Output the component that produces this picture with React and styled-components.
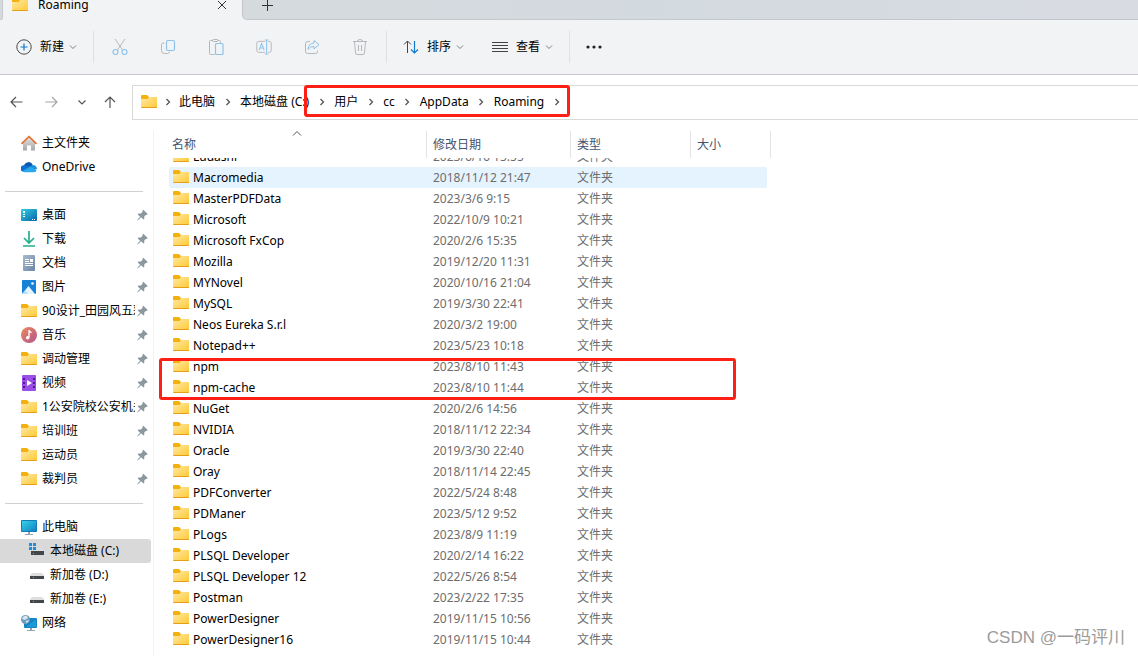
import { Fragment } from 'react';
import styled, { createGlobalStyle } from 'styled-components';

const GlobalStyle = createGlobalStyle`
    * {
        box-sizing: border-box;
    }

    body {
        margin: 0;
        overflow: hidden;
        background-color: #ffffff;
        color: #000000;
        font-family: 'Noto Sans', 'Noto Sans CJK SC', sans-serif;
        font-size: 12px;
        line-height: 20px;
    }

    button {
        padding: 0;
        border: 0;
        background: none;
        color: inherit;
        font: inherit;
    }
`

const Window = styled.div`
    position: relative;
    display: flex;
    flex-direction: column;
    height: 100vh;
    overflow: hidden;
`

/* tabs */

const TabBar = styled.header`
    display: flex;
    flex: none;
    height: 40px;
    margin-top: -20px;
    background-color: #f2f3f5;
`

const TabEdge = styled.div`
    width: 3px;
    background-color: #d6dade;
    border-right: 1px solid #c6cacd;
    border-bottom: 1px solid #c6cacd;
    border-bottom-right-radius: 4px;
`

const ActiveTab = styled.div`
    display: flex;
    align-items: center;
    width: 239px;
    height: 20px;
    margin-top: 15px;
    padding: 0 13px 0 9px;
`

const TabTitle = styled.span`
    flex: 1;
    margin-left: 10px;
`

const TabRest = styled.div`
    flex: 1;
    padding: 15px 0 0 17px;
    background-image: linear-gradient(90deg, #d5dadd, #d3dae0 50%, #d9dbe3);
    border-left: 1px solid #c3c7ca;
    border-bottom: 1px solid #c3c7ca;
    border-bottom-left-radius: 5px;
`

const TabButton = styled.button`
    display: flex;
    align-items: center;
    justify-content: center;
    width: 14px;
    height: 20px;
`

/* toolbar */

const Toolbar = styled.div`
    display: flex;
    flex: none;
    align-items: center;
    height: 55px;
    background-color: #f2f3f5;
    border-bottom: 1px solid #c5c6c9;
`

const MenuButton = styled.button`
    display: flex;
    align-items: center;
    gap: 8px;
    padding: 0 ${props => props.$last ? 16 : 12}px 0 16px;
`

const MenuLabel = styled.span`
    margin-right: -3px;
`

const IconButton = styled.button`
    display: flex;
    align-items: center;
    justify-content: center;
    width: 48px;
    height: 32px;
`

const IconGroup = styled.div`
    display: flex;
    padding: 0 2px;
`

const Separator = styled.div`
    width: 1px;
    height: 32px;
    background-color: #dfe1e4;
`

/* address row */

const AddressRow = styled.div`
    display: flex;
    flex: none;
    padding: 10px 0 5px;
`

const NavButtons = styled.div`
    display: flex;
    align-items: center;
    width: 132px;
    height: 34px;
`

const NavButton = styled.button`
    display: flex;
    align-items: center;
    justify-content: center;
    width: ${props => props.$wide ? 34 : 28}px;
    height: 28px;
`

const AddressBar = styled.nav`
    position: relative;
    display: flex;
    flex: 1;
    align-items: center;
    height: 35px;
    padding: 0 0 1px 8px;
    border: 1px solid #d9d9d9;
    border-right: 0;
    white-space: nowrap;
`

const CrumbArrow = styled.span`
    display: flex;
    flex: none;
    align-items: center;
    justify-content: center;
    width: 25px;

    &:nth-child(2) {
        width: 22px;
    }
`

const Mark = styled.div`
    position: absolute;
    top: ${props => props.$top}px;
    left: ${props => props.$left}px;
    width: ${props => props.$width}px;
    height: ${props => props.$height}px;
    border: 3px solid #ff2015;
    border-radius: 3px;
    pointer-events: none;
`

/* sidebar */

const Content = styled.div`
    display: flex;
    flex: 1;
    min-height: 0;
    padding-top: 6px;
`

const Sidebar = styled.aside`
    flex: none;
    width: 154px;
    padding-right: 2px;
    border-right: 1px solid #f2f2f2;
`

const SideItem = styled.a`
    display: flex;
    align-items: center;
    height: 24px;
    padding: 0 3px 0 ${props => props.$nested ? 29 : 21}px;
    border-radius: 0 3px 3px 0;
    background-color: ${props => props.$selected ? '#d9d9d9' : 'transparent'};
    color: inherit;
    text-decoration: none;

    svg {
        flex: none;
    }
`

const SideLabel = styled.span`
    flex: 1;
    margin: 0 2px 0 5px;
    overflow: hidden;
    white-space: nowrap;
`

const SideDivider = styled.hr`
    height: 1px;
    margin: 12px 8px 11px 5px;
    border: 0;
    background-color: #d0d0d0;
`

/* file list */

const Files = styled.main`
    position: relative;
    flex: 1;
    min-width: 0;
    padding-left: 15px;
    overflow: hidden;
`

const FileTable = styled.table`
    display: block;
`

const FileHead = styled.thead`
    position: relative;
    z-index: 1;
    display: block;
    background-color: #ffffff;

    tr {
        display: grid;
        grid-template-columns: 258px 144px 120px 80px;
        height: 27px;
    }
`

const HeadCell = styled.th`
    position: relative;
    padding: 4px 0 0 ${props => props.$first ? 3 : 6}px;
    border-right: 1px solid #e3e3e3;
    color: #44546f;
    font-weight: 400;
    text-align: left;
`

const SortMark = styled.svg`
    position: absolute;
    top: 0;
    left: 123px;
`

const FileBody = styled.tbody`
    display: block;
    margin-top: -12px;
`

const FileRow = styled.tr`
    display: grid;
    grid-template-columns: 258px 144px 120px 76px;
    width: 598px;
    height: 21px;
    border-radius: 2px;
    background-color: ${props => props.$selected ? '#e5f3ff' : 'transparent'};
`

const FileCell = styled.td`
    padding: 0 0 0 6px;
    color: #6d6d6d;
    line-height: 21px;
    white-space: nowrap;
`

const NameCell = styled(FileCell)`
    display: flex;
    gap: 4px;
    padding-left: 4px;
    color: #000000;

    svg {
        margin-top: 2px;
    }
`

const Watermark = styled.div`
    position: absolute;
    right: 13px;
    bottom: 6px;
    color: #9b9b9b;
    font-family: 'Liberation Sans', 'Noto Sans CJK SC', sans-serif;
    font-size: 17px;
    line-height: 24px;
`

const FolderIcon = () => (
    <svg width="16" height="16" viewBox="0 0 16 16">
        <defs>
            <linearGradient id="folder" x1="0" y1="0" x2="1" y2="1">
                <stop offset="0" stopColor="#ffe9a6" />
                <stop offset="1" stopColor="#ffc933" />
            </linearGradient>
        </defs>
        <path d="M0 2q0-1 1-1h5l2 2h7q1 0 1 1v4H0z" fill="#f4b00c" />
        <path d="M0 5h6.500L8 3h7q1 0 1 1v9q0 1-1 1H1q-1 0-1-1z" fill="url(#folder)" />
        <path d="M0 13q0 1 1 1h14q1 0 1-1z" fill="#e59f16" />
    </svg>
)

const Chevron = ({ color = '#808080' }) => (
    <svg width="8" height="8" viewBox="0 0 8 8" fill="none" stroke={color}>
        <path d="M1 2.500l3 3 3-3" />
    </svg>
)

const Arrow = () => (
    <CrumbArrow>
        <svg width="8" height="8" viewBox="0 0 8 8" fill="none" stroke="#555" strokeWidth="1.3">
            <path d="M2.5 1l3 3-3 3" />
        </svg>
    </CrumbArrow>
)

const PinIcon = () => (
    <svg width="11" height="12" viewBox="0 0 11 12" fill="#8c979e">
        <path d="M6.300.8L10.700 5l-.8.900-.9-.1-1.800 1.900.1 2-.9.900-2.300-2.300L.8 11.600l-.6-.6 2.900-3.200L.7 5.400l.9-.9 2.200.1L5.600 2.800l-.2-1.100z" />
    </svg>
)

const HomeIcon = () => (
    <svg width="16" height="16" viewBox="0 0 16 16">
        <defs>
            <linearGradient id="home" x1="0" y1="0" x2="0" y2="1">
                <stop offset="0" stopColor="#e4e4e4" />
                <stop offset="1" stopColor="#a5a7a9" />
            </linearGradient>
        </defs>
        <path d="M2 7l6-5.500L14 7v8q0 .5-.5.500H10v-5H6v5H2.500Q2 15.500 2 15z" fill="url(#home)" />
        <path d="M1 8.300L8 1.500l7 6.800" fill="none" stroke="#e8702a" strokeWidth="1.700" strokeLinecap="round" strokeLinejoin="round" />
    </svg>
)

const CloudIcon = () => (
    <svg width="16" height="16" viewBox="0 0 16 16">
        <path d="M3 7a4.600 4.600 0 0 1 8.800-1l-2.300 4z" fill="#0a5ab4" />
        <path d="M1.500 12.500A3.200 3.200 0 0 1 4 6.500l5 1-2 5z" fill="#0f6fcd" />
        <path d="M8.500 7.500L12 6q3.500.3 4 4l-3 1z" fill="#1b90e0" />
        <path d="M1.600 12L9 7.700l6.600 3.500q-.4 2-2.600 2H4q-1.600 0-2.400-1.200z" fill="#2aa8ee" />
    </svg>
)

const DesktopIcon = () => (
    <svg width="16" height="16" viewBox="0 0 16 16">
        <defs>
            <linearGradient id="desktop" x1="0" y1="0" x2="1" y2="1">
                <stop offset="0" stopColor="#30d0e0" />
                <stop offset="1" stopColor="#0a62ad" />
            </linearGradient>
        </defs>
        <rect y="2" width="16" height="12" rx="1" fill="url(#desktop)" />
        <path d="M2 4h2v2H2zM2 7h2v1H2zM2 9h2v1H2zM11 12h1v1h-1zM13 12h1v1h-1z" fill="#fff" />
    </svg>
)

const DownloadIcon = () => (
    <svg width="16" height="16" viewBox="0 0 16 16" fill="none" stroke="#22b08c" strokeWidth="1.700">
        <path d="M8 0v11.500M3 7l5 5 5-5M2 15h12" />
    </svg>
)

const DocumentIcon = () => (
    <svg width="16" height="16" viewBox="0 0 16 16">
        <defs>
            <linearGradient id="document" x1="0" y1="0" x2="1" y2="1">
                <stop offset="0" stopColor="#a9bad0" />
                <stop offset="1" stopColor="#6b86a8" />
            </linearGradient>
        </defs>
        <rect x="2" y="0" width="12" height="16" rx="1" fill="url(#document)" />
        <path d="M4 4h4v1H4zM4 6h4v1H4zM9 4h3v3H9zM4 8h8v1H4zM4 10h8v1H4z" fill="#fff" />
    </svg>
)

const PictureIcon = () => (
    <svg width="16" height="16" viewBox="0 0 16 16">
        <rect x="1" y="1" width="14" height="14" rx="1" fill="#1581d8" />
        <path d="M1 15l6.500-8L14 15z" fill="#e6f4fd" />
        <path d="M1 15l3-3.500L7 15z" fill="#b5dcf8" />
        <circle cx="11.500" cy="4.500" r="1.300" fill="#fff" />
    </svg>
)

const MusicIcon = () => (
    <svg width="16" height="16" viewBox="0 0 16 16">
        <defs>
            <linearGradient id="music" x1="0" y1="0" x2="1" y2="1">
                <stop offset="0" stopColor="#ee8a5b" />
                <stop offset="1" stopColor="#b0558e" />
            </linearGradient>
        </defs>
        <circle cx="8" cy="8" r="8" fill="url(#music)" />
        <path d="M8 3v7.500M8 3.500q.5 1.500 2.500 2" fill="none" stroke="#fff" strokeWidth="1.300" />
        <circle cx="6.700" cy="10.700" r="1.800" fill="#fff" />
    </svg>
)

const VideoIcon = () => (
    <svg width="16" height="16" viewBox="0 0 16 16">
        <rect x="1" y="0" width="14" height="16" rx="1" fill="#9a4fe6" />
        <path d="M2 3h2v2H2zM2 7h2v2H2zM2 11h2v2H2zM12 3h2v2h-2zM12 7h2v2h-2zM12 11h2v2h-2z" fill="#4d1c91" />
        <path d="M6 5l5 3-5 3z" fill="#fff" />
    </svg>
)

const MonitorIcon = () => (
    <svg width="16" height="16" viewBox="0 0 16 16">
        <defs>
            <linearGradient id="monitor" x1="0" y1="0" x2="1" y2="1">
                <stop offset="0" stopColor="#35d3e6" />
                <stop offset="1" stopColor="#1181c2" />
            </linearGradient>
        </defs>
        <rect y="1" width="16" height="12" rx="1" fill="#147ab9" />
        <rect x="1" y="2" width="14" height="10" fill="url(#monitor)" />
        <path d="M7 13h2v2H7zM4 15h8v1H4z" fill="#94a3ad" />
    </svg>
)

const DriveIcon = ({ system }) => (
    <svg width="16" height="16" viewBox="0 0 16 16">
        {system && (
            <path d="M0 0h3v3H0zM4 0h3v3H4zM0 4h3v3H0zM4 4h3v3H4z" fill="#1a8fdc" />
        )}
        <path d={system ? 'M8 5h5l2 3v1H2V8h6z' : 'M3 6h10l2 2v1H1V8z'} fill="#dcdee0" />
        <path d={system ? 'M2 8h13v4H2z' : 'M1 9h14v3H1z'} fill="#44474a" />
        <rect x="4" y="10" width="1" height="1" fill="#39e353" />
    </svg>
)

const NetworkIcon = () => (
    <svg width="16" height="16" viewBox="0 0 16 16">
        <rect x="3" y="3" width="13" height="10" rx="1" fill="#1583c4" />
        <path d="M15 4v8H5z" fill="#1a9bd6" />
        <path d="M9 13h2v2H9zM6 15h8v1H6z" fill="#94a3ad" />
        <circle cx="4.500" cy="4.500" r="4.500" fill="#6d9dbd" />
        <path d="M2 2q2-2 4-1l1 2-3 2-3-1zM5 6l3-1-1 2-2 1z" fill="#d9e6ee" />
    </svg>
)

const quickAccess = [
    { label: '桌面', Icon: DesktopIcon },
    { label: '下载', Icon: DownloadIcon },
    { label: '文档', Icon: DocumentIcon },
    { label: '图片', Icon: PictureIcon },
    { label: '90设计_田园风五彩', Icon: FolderIcon },
    { label: '音乐', Icon: MusicIcon },
    { label: '调动管理', Icon: FolderIcon },
    { label: '视频', Icon: VideoIcon },
    { label: '1公安院校公安机关', Icon: FolderIcon },
    { label: '培训班', Icon: FolderIcon },
    { label: '运动员', Icon: FolderIcon },
    { label: '裁判员', Icon: FolderIcon },
];

const crumbs = ['此电脑', '本地磁盘 (C:)', '用户', 'cc', 'AppData', 'Roaming'];

const files = [
    ['Ludashi', '2023/6/16 15:55'],
    ['Macromedia', '2018/11/12 21:47'],
    ['MasterPDFData', '2023/3/6 9:15'],
    ['Microsoft', '2022/10/9 10:21'],
    ['Microsoft FxCop', '2020/2/6 15:35'],
    ['Mozilla', '2019/12/20 11:31'],
    ['MYNovel', '2020/10/16 21:04'],
    ['MySQL', '2019/3/30 22:41'],
    ['Neos Eureka S.r.l', '2020/3/2 19:00'],
    ['Notepad++', '2023/5/23 10:18'],
    ['npm', '2023/8/10 11:43'],
    ['npm-cache', '2023/8/10 11:44'],
    ['NuGet', '2020/2/6 14:56'],
    ['NVIDIA', '2018/11/12 22:34'],
    ['Oracle', '2019/3/30 22:40'],
    ['Oray', '2018/11/14 22:45'],
    ['PDFConverter', '2022/5/24 8:48'],
    ['PDManer', '2023/5/12 9:52'],
    ['PLogs', '2023/8/9 11:19'],
    ['PLSQL Developer', '2020/2/14 16:22'],
    ['PLSQL Developer 12', '2022/5/26 8:54'],
    ['Postman', '2023/2/22 17:35'],
    ['PowerDesigner', '2019/11/15 10:56'],
    ['PowerDesigner16', '2019/11/15 10:44'],
];

const Tabs = () => (
    <TabBar>
        <TabEdge />
        <ActiveTab>
            <FolderIcon />
            <TabTitle>Roaming</TabTitle>
            <TabButton aria-label="关闭">
                <svg width="10" height="10" viewBox="0 0 10 10" stroke="#333">
                    <path d="M1 1l8 8M9 1L1 9" />
                </svg>
            </TabButton>
        </ActiveTab>
        <TabRest>
            <TabButton aria-label="新标签页">
                <svg width="11" height="11" viewBox="0 0 11 11" stroke="#333">
                    <path d="M5.500 0v11M0 5.500h11" />
                </svg>
            </TabButton>
        </TabRest>
    </TabBar>
)

const CommandBar = () => (
    <Toolbar>
        <MenuButton $last>
            <svg width="16" height="16" viewBox="0 0 16 16" fill="none">
                <circle cx="8" cy="8" r="7.200" stroke="#4a4a4a" />
                <path d="M8 4.500v7M4.500 8h7" stroke="#0f78cf" strokeWidth="1.200" />
            </svg>
            <MenuLabel>新建</MenuLabel>
            <Chevron />
        </MenuButton>
        <Separator />
        <IconGroup>
            <IconButton aria-label="剪切">
                <svg width="16" height="16" viewBox="0 0 16 16" fill="none">
                    <path d="M3 0l7.500 11M13 0L5.500 11" stroke="#b5b8bb" />
                    <circle cx="3.500" cy="13" r="2.500" stroke="#8dc3ec" strokeWidth="1.200" />
                    <circle cx="12.500" cy="13" r="2.500" stroke="#8dc3ec" strokeWidth="1.200" />
                </svg>
            </IconButton>
            <IconButton aria-label="复制">
                <svg width="16" height="16" viewBox="0 0 16 16" fill="none">
                    <path d="M4.500 4H3Q1.500 4 1.500 5.500v6q0 3 3 3h3Q9 14.500 9.500 12.500" stroke="#b5b8bb" />
                    <rect x="6.500" y="1.500" width="8" height="10" rx="1.500" stroke="#8dc3ec" strokeWidth="1.200" />
                </svg>
            </IconButton>
            <IconButton aria-label="粘贴">
                <svg width="16" height="16" viewBox="0 0 16 16" fill="none">
                    <path d="M5 1.500H2.500q-1 0-1 1v12q0 1 1 1h4M10 1.500h1.500q1 0 1 1V4" stroke="#b5b8bb" />
                    <rect x="4.500" y=".5" width="5.500" height="2" rx="1" stroke="#b5b8bb" />
                    <rect x="7.500" y="4.500" width="7.500" height="11" rx="1" stroke="#8dc3ec" strokeWidth="1.200" />
                </svg>
            </IconButton>
            <IconButton aria-label="重命名">
                <svg width="16" height="16" viewBox="0 0 17 16" fill="none">
                    <path d="M9.500 2H3Q.8 2 .8 4.200v7.300q0 2.200 2.200 2.200h6.500M13 2h1q2.200 0 2.200 2.200v7.300q0 2.200-2.200 2.200h-1" stroke="#b5b8bb" />
                    <path d="M11.300.5v15M9.500.5h3.600M9.500 15.500h3.600M3.300 11.300l2.700-7 2.700 7M4.200 9h3.600" stroke="#8dc3ec" strokeWidth="1.100" />
                </svg>
            </IconButton>
            <IconButton aria-label="共享">
                <svg width="16" height="16" viewBox="0 0 16 16" fill="none">
                    <path d="M6 2.500H3.500q-2 0-2 2v8q0 2 2 2h8q2 0 2-2v-1" stroke="#b5b8bb" />
                    <path d="M10 1.500l5 4.200-5 4.200V7.500Q6 7.200 4 10.500 4.500 4.500 10 4z" stroke="#8dc3ec" strokeLinejoin="round" />
                </svg>
            </IconButton>
            <IconButton aria-label="删除">
                <svg width="16" height="16" viewBox="0 0 16 16" fill="none" stroke="#b5b8bb">
                    <path d="M1 2.500h14M5.500 2.500q0-2 2.500-2t2.500 2M2.500 2.500l1 11.500q.2 1.500 1.500 1.500h6q1.300 0 1.500-1.500l1-11.500M6.500 6v6M9.500 6v6" />
                </svg>
            </IconButton>
        </IconGroup>
        <Separator />
        <MenuButton>
            <svg width="16" height="16" viewBox="0 0 16 16" fill="none">
                <path d="M4.500 14V2M1 5.500L4.500 2 8 5.500" stroke="#444" />
                <path d="M11.500 2v12M8 10.500l3.500 3.500 3.500-3.500" stroke="#0f78cf" strokeWidth="1.200" />
            </svg>
            <MenuLabel>排序</MenuLabel>
            <Chevron />
        </MenuButton>
        <MenuButton $last>
            <svg width="16" height="16" viewBox="0 0 16 16" stroke="#444">
                <path d="M0 3.500h16M0 6.500h16M0 9.500h16M0 12.500h16" />
            </svg>
            <MenuLabel>查看</MenuLabel>
            <Chevron />
        </MenuButton>
        <Separator />
        <IconButton aria-label="更多">
            <svg width="18" height="4" viewBox="0 0 18 4" fill="#222">
                <circle cx="3" cy="2" r="1.600" />
                <circle cx="9" cy="2" r="1.600" />
                <circle cx="15" cy="2" r="1.600" />
            </svg>
        </IconButton>
    </Toolbar>
)

const Address = () => (
    <AddressRow>
        <NavButtons>
            <NavButton $wide aria-label="后退">
                <svg width="14" height="12" viewBox="0 0 14 12" fill="none" stroke="#555" strokeWidth="1.200">
                    <path d="M6 1L1 6l5 5M1 6h11.500" />
                </svg>
            </NavButton>
            <NavButton $wide aria-label="前进">
                <svg width="14" height="12" viewBox="0 0 14 12" fill="none" stroke="#a5a5a5" strokeWidth="1.200">
                    <path d="M8 1l5 5-5 5M13 6H1.500" />
                </svg>
            </NavButton>
            <NavButton aria-label="最近">
                <svg width="10" height="8" viewBox="0 0 10 8" fill="none" stroke="#555" strokeWidth="1.200">
                    <path d="M1.500 2.500L5 6l3.500-3.500" />
                </svg>
            </NavButton>
            <NavButton aria-label="向上">
                <svg width="12" height="12" viewBox="0 0 12 12" fill="none" stroke="#555" strokeWidth="1.200">
                    <path d="M1 6l5-5 5 5M6 1v11" />
                </svg>
            </NavButton>
        </NavButtons>
        <AddressBar>
            <FolderIcon />
            {crumbs.map(crumb => (
                <Fragment key={crumb}>
                    <Arrow />
                    <button>{crumb}</button>
                </Fragment>
            ))}
            <Arrow />
            <Mark $top={-1} $left={171} $width={266} $height={32} />
        </AddressBar>
    </AddressRow>
)

const SideBar = () => (
    <Sidebar>
        <SideItem href="#home"><HomeIcon /><SideLabel>主文件夹</SideLabel></SideItem>
        <SideItem href="#onedrive"><CloudIcon /><SideLabel>OneDrive</SideLabel></SideItem>
        <SideDivider />
        {quickAccess.map(({ label, Icon }) => (
            <SideItem href="#quick" key={label}>
                <Icon />
                <SideLabel>{label}</SideLabel>
                <PinIcon />
            </SideItem>
        ))}
        <SideDivider />
        <SideItem href="#pc"><MonitorIcon /><SideLabel>此电脑</SideLabel></SideItem>
        <SideItem href="#c" $nested $selected><DriveIcon system /><SideLabel>本地磁盘 (C:)</SideLabel></SideItem>
        <SideItem href="#d" $nested><DriveIcon /><SideLabel>新加卷 (D:)</SideLabel></SideItem>
        <SideItem href="#e" $nested><DriveIcon /><SideLabel>新加卷 (E:)</SideLabel></SideItem>
        <SideItem href="#network"><NetworkIcon /><SideLabel>网络</SideLabel></SideItem>
    </Sidebar>
)

const FileList = () => (
    <Files>
        <FileTable>
            <FileHead>
                <tr>
                    <HeadCell $first>
                        名称
                        <SortMark width="10" height="5" viewBox="0 0 10 5" fill="none" stroke="#555">
                            <path d="M1 4.500l4-4 4 4" />
                        </SortMark>
                    </HeadCell>
                    <HeadCell>修改日期</HeadCell>
                    <HeadCell>类型</HeadCell>
                    <HeadCell>大小</HeadCell>
                </tr>
            </FileHead>
            <FileBody>
                {files.map(([name, date]) => (
                    <FileRow key={name} $selected={name === 'Macromedia'}>
                        <NameCell><FolderIcon />{name}</NameCell>
                        <FileCell>{date}</FileCell>
                        <FileCell>文件夹</FileCell>
                        <FileCell />
                    </FileRow>
                ))}
            </FileBody>
        </FileTable>
        <Mark $top={227} $left={5} $width={577} $height={42} />
    </Files>
)

const App = () => {
    return (
        <Window>
            <GlobalStyle />
            <Tabs />
            <CommandBar />
            <Address />
            <Content>
                <SideBar />
                <FileList />
            </Content>
            <Watermark>CSDN @一码评川</Watermark>
        </Window>
    )
}

export default App;
